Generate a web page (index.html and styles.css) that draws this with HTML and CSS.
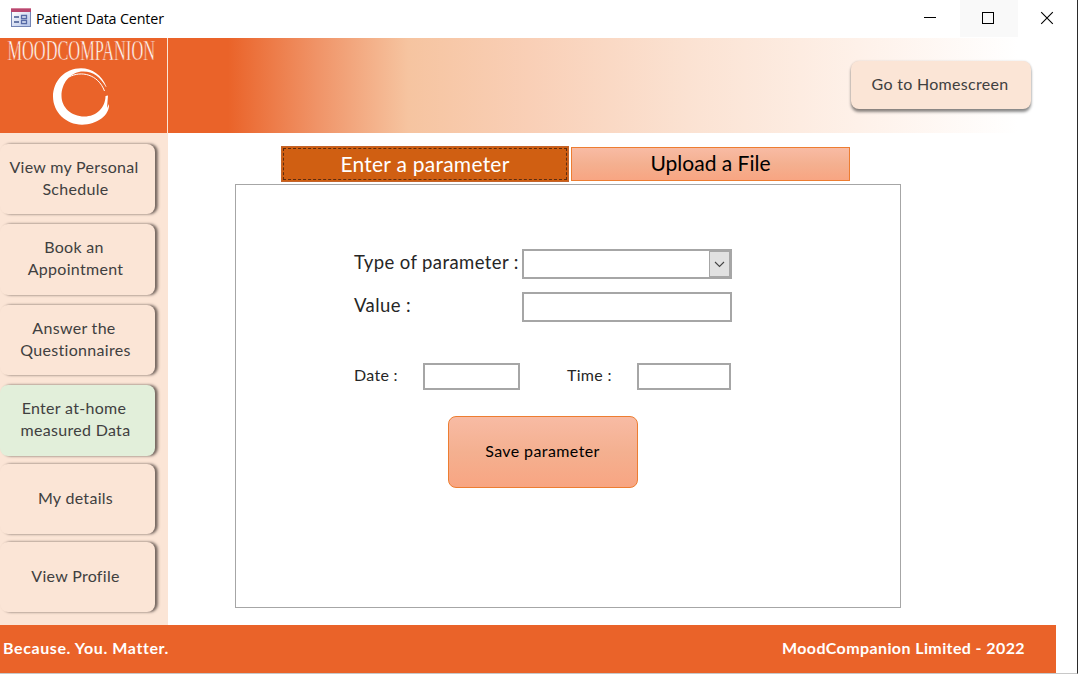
FILE: index.html
```html
<!DOCTYPE html>
<html lang="en">
<head>
<meta charset="utf-8">
<title>Patient Data Center</title>
<link rel="stylesheet" href="styles.css">
</head>
<body>
<div class="window">
  <div class="titlebar">
    <svg class="app-icon" width="20" height="20" viewBox="0 0 20 20">
      <defs><linearGradient id="form" x1="0" y1="0" x2="1" y2="1"><stop offset="0" stop-color="#fff"/><stop offset="1" stop-color="#b4c3e8"/></linearGradient></defs>
      <rect x="0" y="0" width="20" height="19" fill="#7384b4"/>
      <rect x="1" y="4" width="18" height="14" fill="url(#form)"/>
      <rect x="0" y="0" width="20" height="4" fill="#b8476f"/>
      <rect x="0" y="0" width="20" height="1" fill="#d27f9b"/>
      <path d="M3 9h5M3 14h5" stroke="#43578f" stroke-width="1.500"/>
      <path d="M10.500 7.500h5v3h-5zM10.500 12.500h5v3h-5z" fill="#e6ecfa" stroke="#566aa6" stroke-width="1.300"/>
    </svg>
    <span class="title">Patient Data Center</span>
    <div class="controls">
      <svg class="control" viewBox="0 0 58 38"><path d="M22 17.500h12" stroke="#000"/></svg>
      <svg class="control control-hover" viewBox="0 0 58 38"><rect x="22.500" y="12.500" width="11" height="11" fill="none" stroke="#000"/></svg>
      <svg class="control" viewBox="0 0 58 38"><path d="M23.200 12.200l11.600 11.600M34.800 12.200L23.200 23.800" stroke="#000" stroke-width="1.100"/></svg>
    </div>
  </div>

  <header class="header">
    <div class="brand">
      <svg width="167" height="95" viewBox="0 0 167 95">
        <text class="brand-name" x="7.500" y="22" textLength="147.500" lengthAdjust="spacingAndGlyphs">MOODCOMPANION</text>
        <path class="brand-ring" d="M106.500 49C102 37 92 30.200 81 30.200C65 30.200 53 43 53 58.500C53 74 66 86.700 82 86.700C97 86.700 110 77 109 66L107 70L108 57.500L105.500 58C105.500 70 96 78.500 84.500 78.500C71 78.500 61.500 69 61.500 58C61.500 45 70 35 81 33.500C92 32.500 100 38 106 49Z"/>
        <path class="brand-stroke" d="M69 39C81 32.500 98 36 104.500 53"/>
      </svg>
    </div>
    <div class="banner"><button class="home">Go to Homescreen</button></div>
  </header>

  <div class="body">
    <nav class="sidebar">
      <button class="nav"><span class="l1">View my Personal</span><span class="l2">Schedule</span></button>
      <button class="nav"><span class="l1">Book an</span><span class="l2">Appointment</span></button>
      <button class="nav"><span class="l1">Answer the</span><span class="l2">Questionnaires</span></button>
      <button class="nav active"><span class="l1">Enter at-home</span><span class="l2">measured Data</span></button>
      <button class="nav"><span class="l2">My details</span></button>
      <button class="nav"><span class="l2">View Profile</span></button>
    </nav>
    <main class="content">
      <div class="tabs">
        <button class="tab selected"><span>Enter a parameter</span></button>
        <button class="tab"><span>Upload a File</span></button>
      </div>
      <section class="panel">
        <div class="row row-type"><label class="big">Type of parameter :</label>
          <div class="field wide"><span class="drop"><svg width="11" height="7" viewBox="0 0 11 7"><path d="M1 1l4.500 4.500L10 1" fill="none" stroke="#444" stroke-width="1.100"/></svg></span></div>
        </div>
        <div class="row row-value"><label class="big">Value :</label><div class="field wide"></div></div>
        <div class="row row-when"><label class="date">Date :</label><div class="field small"></div><label class="time">Time :</label><div class="field small last"></div></div>
        <button class="save">Save parameter</button>
      </section>
    </main>
  </div>

  <footer class="footer"><span class="motto">Because. You. Matter.</span><span class="company">MoodCompanion Limited - 2022</span></footer>
</div>
</body>
</html>
```

FILE: styles.css
```css
* { box-sizing: border-box; }
body { margin: 0; background: #fff; font-family: Lato, "Liberation Sans", sans-serif; }
button { font-family: inherit; margin: 0; padding: 0; border: 0; white-space: nowrap; }
svg { display: block; flex: none; overflow: visible; }
.window { width: 1078px; height: 674px; border-right: 1px solid #2b2b2b; border-bottom: 1px solid #c8c8c8; overflow: hidden; display: flex; flex-direction: column; }

.titlebar { height: 38px; flex: none; display: flex; align-items: center; padding-left: 11px; }
.app-icon { margin-top: -2px; }
.title { margin-left: 5px; padding-bottom: 2px; font: 14.3px "Open Sans", sans-serif; letter-spacing: -0.15px; color: #000; }
.controls { display: flex; margin: 0 1px 0 auto; }
.control { width: 58px; height: 38px; }
.control-hover { background: linear-gradient(#f9f9f9 37px, #fff 37px); }

.header { height: 95px; width: 1056px; flex: none; display: flex; }
.brand { width: 168px; background: #ea6329; border-right: 1px solid #fbe5d6; }
.brand-name { font: 28.500px "Liberation Serif", serif; fill: #fff; stroke: #ea6329; stroke-width: .6px; }
.brand-ring { fill: #fff; }
.brand-stroke { fill: none; stroke: #fff; stroke-width: 1; }
.banner { flex: 1; display: flex; justify-content: flex-end; padding: 23px 25px 0 0; background: linear-gradient(90deg, #ea6329 0, #ea6329 60px, #f09468 150px, #f6c4a0 240px, #f9cfb6 360px, #fbe2d2 520px, #fef1e9 690px, #fff 850px); }
.home { width: 180px; height: 48px; padding: 0 2px 3px 0; border-radius: 8px; background: #fbe5d6; color: #404040; font-size: 16px; letter-spacing: 0.3px; box-shadow: 0 3px 3px rgba(0,0,0,.45), 0 0 2px rgba(0,0,0,.15); }

.body { height: 492px; flex: none; display: flex; }
.sidebar { width: 168px; background: #fbe5d6; padding-top: 11px; display: flex; flex-direction: column; gap: 10px; }
.nav { width: 155px; height: 70px; flex: none; border-radius: 8px; background: #fbe5d6; color: #404040; font-size: 16px; line-height: 22px; letter-spacing: 0.3px; display: flex; flex-direction: column; align-items: center; justify-content: center; padding-bottom: 3px; box-shadow: 3px 0 3px rgba(60,50,45,.55), 2px 0 2px rgba(60,50,45,.3); }
.nav .l1 { margin-right: 7px; }
.nav .l2 { margin-right: 4px; }
.nav:nth-child(2), .nav:nth-child(4) { height: 71px; margin-bottom: -1px; padding-bottom: 4px; }
.active { background: #e2efda; }
.nav:nth-child(3) { margin-top: 1px; }
.nav:nth-child(5) { margin-top: -1px; }
.nav:nth-child(6) { margin-top: -2px; }

.content { flex: 1; padding: 13px 0 0 67px; }
.tabs { display: flex; align-items: center; gap: 2px; margin-left: 46px; height: 36px; }
.tab { width: 279px; height: 34px; padding-bottom: 3px; border: 1px solid #ed7d31; background: linear-gradient(#f8bba4, #f4b090 50%, #f8a582); color: #000; font-size: 21px; letter-spacing: 0; }
.selected { width: 288px; height: 36px; padding-bottom: 1px; border: 1px solid #c3642a; background: #d05f12; color: #fff; outline: 1px dashed #5c2c10; outline-offset: -3px; letter-spacing: .25px; }
.panel { width: 666px; height: 424px; margin-top: 2px; border: 1px solid #a6a6a6; padding: 64px 0 0 118px; }
.row { display: flex; align-items: center; color: #262626; font-size: 16px; letter-spacing: .3px; white-space: nowrap; }
.row label { padding-bottom: 4px; }
.row .big { width: 168px; font-size: 18.500px; letter-spacing: .4px; padding-bottom: 4px; }
.row-value { margin-top: 13px; }
.row-when { margin-top: 41px; }
.field { border: 2px solid #a6a6a6; background: #fff; }
.wide { width: 210px; height: 30px; display: flex; justify-content: flex-end; }
.drop { width: 21px; height: 26px; background: #e1e1e1; border: 1px solid #a6a6a6; display: flex; align-items: center; justify-content: center; }
.small { width: 97px; height: 27px; }
.last { width: 94px; }
.date { width: 69px; }
.time { width: 70px; margin-left: 47px; }
.save { display: block; margin: 26px 0 0 94px; width: 190px; height: 72px; padding: 0 1px 3px 0; border-radius: 8px; border: 1px solid #ed7d31; background: linear-gradient(#f8bba4, #f4b090 50%, #f8a582); color: #000; font-size: 16px; letter-spacing: .4px; }

.footer { width: 1056px; height: 48px; flex: none; background: #ea6329; color: #fff; font-weight: 700; font-size: 16px; letter-spacing: .6px; display: flex; justify-content: space-between; align-items: center; padding: 0 31px 3px 3px; }
.company { letter-spacing: .4px; }
```
